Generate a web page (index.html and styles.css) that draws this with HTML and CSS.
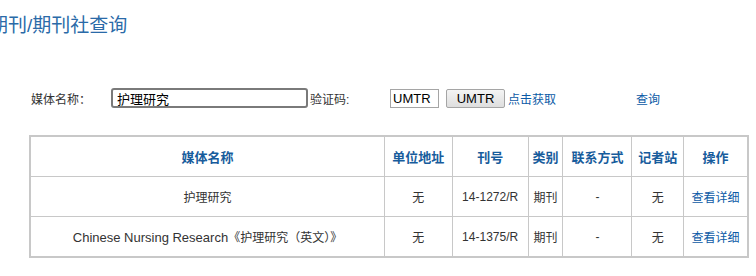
FILE: index.html
```html
<!DOCTYPE html>
<html lang="zh-CN">
<head>
    <meta charset="UTF-8">
    <title>期刊/期刊社查询</title>
    <link rel="stylesheet" href="styles.css">
</head>
<body>
    <div class="page">
        <h2 class="title">期刊/期刊社查询</h2>

        <form class="search-form">
            <label class="lbl-name" for="mediaName">媒体名称：</label>
            <input type="text" id="mediaName" class="name-input" value="护理研究">
            <label class="lbl-code" for="code">验证码:</label>
            <input type="text" id="code" class="code-input" value="UMTR">
            <button type="button" class="code-btn">UMTR</button>
            <a href="#" class="link">点击获取</a>
            <a href="#" class="link query">查询</a>
        </form>

        <table class="result">
            <thead>
                <tr>
                    <th class="c-name">媒体名称</th>
                    <th class="c-addr">单位地址</th>
                    <th class="c-no">刊号</th>
                    <th class="c-type">类别</th>
                    <th class="c-contact">联系方式</th>
                    <th class="c-station">记者站</th>
                    <th class="c-op">操作</th>
                </tr>
            </thead>
            <tbody>
                <tr>
                    <td>护理研究</td>
                    <td>无</td>
                    <td>14-1272/R</td>
                    <td>期刊</td>
                    <td>-</td>
                    <td>无</td>
                    <td><a href="#" class="link">查看详细</a></td>
                </tr>
                <tr>
                    <td><span class="en">Chinese Nursing Research</span>《护理研究（英文）》</td>
                    <td>无</td>
                    <td>14-1375/R</td>
                    <td>期刊</td>
                    <td>-</td>
                    <td>无</td>
                    <td><a href="#" class="link">查看详细</a></td>
                </tr>
            </tbody>
        </table>
    </div>
</body>
</html>
```

FILE: styles.css
```css
body {
    margin: 0;
    font-family: "Liberation Sans", Arial, "Noto Sans CJK SC", sans-serif;
    font-size: 12px;
    color: #333;
    background: #fff;
}
.page {
    width: 756px;
    overflow: hidden;
}
.title {
    margin: 13px 0 0 -11px;
    font-size: 19px;
    font-weight: normal;
    line-height: 25px;
    color: #2a6aa8;
}
.search-form {
    display: flex;
    align-items: center;
    height: 20px;
    margin-top: 50px;
    padding-left: 31px;
}
.lbl-name {
    width: 80px;
}
.name-input {
    width: 197px;
    height: 20px;
    box-sizing: border-box;
    border: 2px solid #7a7a7a;
    border-radius: 3px;
    padding: 0 4px;
    font-family: inherit;
    font-size: 13px;
    color: #000;
}
.lbl-code {
    margin-left: 2px;
    width: 80px;
}
.code-input {
    width: 49px;
    height: 19px;
    box-sizing: border-box;
    border: 1px solid #a5a5a5;
    padding: 0 2px;
    font-family: inherit;
    font-size: 13px;
    color: #000;
}
.code-btn {
    margin-left: 7px;
    width: 59px;
    height: 19px;
    border: 1px solid #a5a5a5;
    border-radius: 2px;
    background: linear-gradient(#f4f4f4, #dedede);
    font-family: inherit;
    font-size: 13px;
    color: #000;
    padding: 0;
}
.link {
    color: #0b5aa6;
    text-decoration: none;
}
.search-form .link {
    margin-left: 3px;
}
.search-form .query {
    margin-left: 80px;
}
.result {
    margin: 27px 0 0 29px;
    border-collapse: collapse;
    border: 2px solid #c8c8c8;
    width: 720px;
}
.result th,
.result td {
    border: 1px solid #c8c8c8;
    height: 39px;
    padding: 0;
    text-align: center;
}
.result th {
    color: #175c9c;
    font-size: 13px;
    font-weight: bold;
}
.en {
    font-size: 13px;
}
.c-name { width: 354px; }
.c-addr { width: 67px; }
.c-no { width: 75px; }
.c-type { width: 34px; }
.c-contact { width: 68px; }
.c-station { width: 51px; }
.c-op { width: 63px; }
```
